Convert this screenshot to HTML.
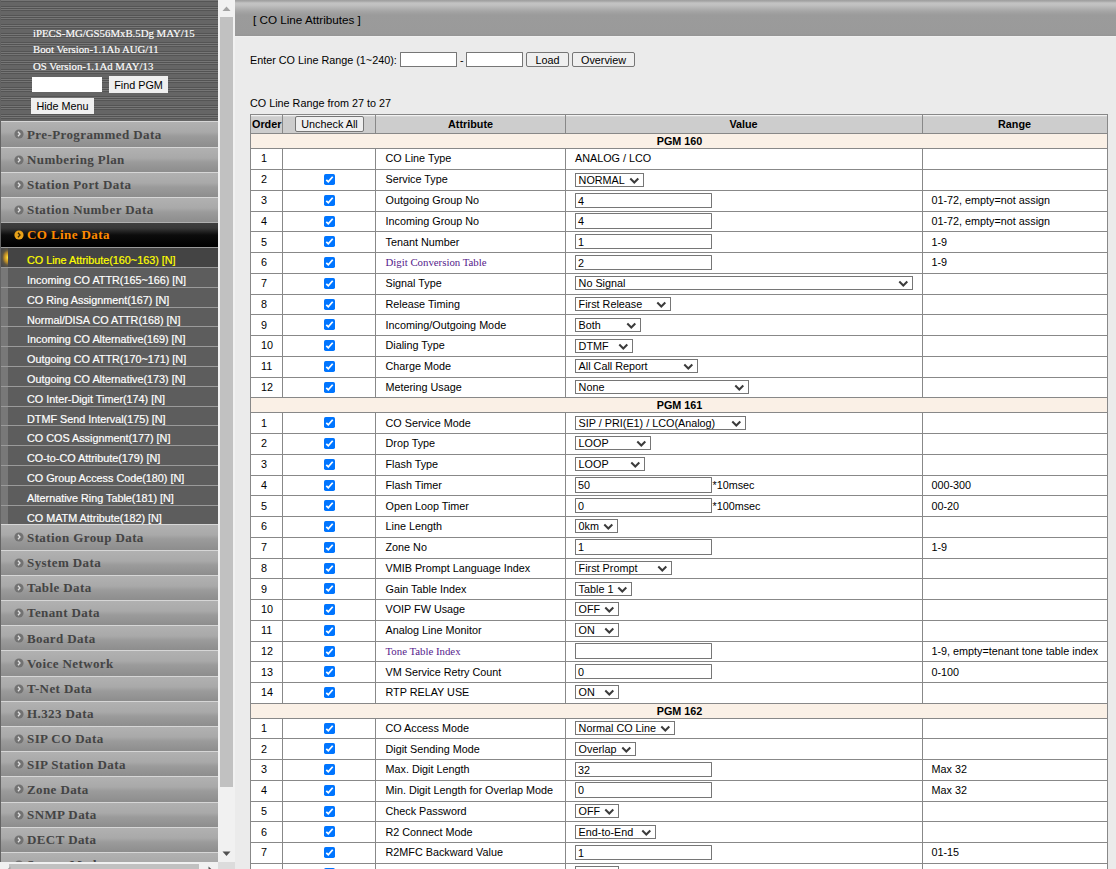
<!DOCTYPE html><html><head><meta charset="utf-8"><style>
html,body{margin:0;padding:0;width:1116px;height:869px;overflow:hidden;background:#ebebeb;font-family:'Liberation Sans',sans-serif;}
svg{display:block;}
.t{position:absolute;white-space:nowrap;line-height:12px;}
.r{position:absolute;}
.sel{position:absolute;box-sizing:border-box;border:1px solid #767676;background:#fff;}
.inp{position:absolute;box-sizing:border-box;border:1px solid #767676;border-radius:0.5px;background:#fff;}
.btn{position:absolute;box-sizing:border-box;background:#efefef;}
</style></head><body>
<div class="r" style="left:235px;top:0px;width:881px;height:36px;background:linear-gradient(#9f9f9f 0px,#a4a4a4 1px,#c3c3c3 3px,#c1c1c1 5px,#a6a6a6 11px,#9b9b9b 15px,#9a9a9a 34px,#959595 36px)"></div>
<div class="r" style="left:235px;top:36px;width:881px;height:1px;background:#f0f0f0"></div>
<div class="t" style="left:253px;top:14px;font-size:11.7px;color:#000;font-family:'Liberation Sans', sans-serif;font-weight:normal;">[ CO Line Attributes ]</div>
<div class="t" style="left:250px;top:54px;font-size:10.8px;color:#000;font-family:'Liberation Sans', sans-serif;font-weight:normal;">Enter CO Line Range (1~240):</div>
<div class="inp" style="left:400px;top:52px;width:57px;height:15px;"><div class="t" style="left:2px;top:1px;font-size:10.8px;"></div></div>
<div class="t" style="left:460px;top:54px;font-size:10.8px;color:#000;font-family:'Liberation Sans', sans-serif;font-weight:normal;">-</div>
<div class="inp" style="left:466px;top:52px;width:57px;height:15px;"><div class="t" style="left:2px;top:1px;font-size:10.8px;"></div></div>
<div class="btn" style="left:526px;top:52px;width:43px;height:15px;border:1px solid #767676;border-radius:2px;"></div>
<div class="t" style="left:247.5px;width:600px;text-align:center;top:54px;font-size:10.8px;color:#000;font-family:'Liberation Sans', sans-serif;font-weight:normal;">Load</div>
<div class="btn" style="left:572px;top:52px;width:63px;height:15px;border:1px solid #767676;border-radius:2px;"></div>
<div class="t" style="left:303.5px;width:600px;text-align:center;top:54px;font-size:10.8px;color:#000;font-family:'Liberation Sans', sans-serif;font-weight:normal;">Overview</div>
<div class="t" style="left:250px;top:97px;font-size:10.8px;color:#000;font-family:'Liberation Sans', sans-serif;font-weight:normal;">CO Line Range from 27 to 27</div>
<div class="r" style="left:250px;top:114px;width:858px;height:20px;background:linear-gradient(#888 0px,#888 1px,#f2f2f2 1px,#f2f2f2 2px,#dadada 2px,#d0d0d0 3px,#cdcdcd 3px,#cdcdcd 100%)"></div>
<div class="t" style="left:252px;top:118px;font-size:10.8px;color:#000;font-family:'Liberation Sans', sans-serif;font-weight:bold;">Order</div>
<div class="btn" style="left:295px;top:116px;width:69px;height:16px;border:1px solid #767676;border-radius:2px;"></div>
<div class="t" style="left:29.5px;width:600px;text-align:center;top:118px;font-size:10.8px;color:#000;font-family:'Liberation Sans', sans-serif;font-weight:normal;">Uncheck All</div>
<div class="t" style="left:170.5px;width:600px;text-align:center;top:118px;font-size:10.8px;color:#000;font-family:'Liberation Sans', sans-serif;font-weight:bold;">Attribute</div>
<div class="t" style="left:443.5px;width:600px;text-align:center;top:118px;font-size:10.8px;color:#000;font-family:'Liberation Sans', sans-serif;font-weight:bold;">Value</div>
<div class="t" style="left:714.5px;width:600px;text-align:center;top:118px;font-size:10.8px;color:#000;font-family:'Liberation Sans', sans-serif;font-weight:bold;">Range</div>
<div class="r" style="left:250px;top:133px;width:858px;height:16px;background:#faf0e6"></div>
<div class="t" style="left:379.5px;width:600px;text-align:center;top:135px;font-size:10.8px;color:#000;font-family:'Liberation Sans', sans-serif;font-weight:bold;">PGM 160</div>
<div class="r" style="left:250px;top:148px;width:858px;height:22px;background:#fff"></div>
<div class="t" style="left:261px;top:152px;font-size:10.8px;color:#000;font-family:'Liberation Sans', sans-serif;font-weight:normal;">1</div>
<div class="t" style="left:385.5px;top:152px;font-size:10.8px;color:#000;font-family:'Liberation Sans', sans-serif;font-weight:normal;">CO Line Type</div>
<div class="t" style="left:575px;top:152px;font-size:10.8px;color:#000;font-family:'Liberation Sans', sans-serif;font-weight:normal;">ANALOG / LCO</div>
<div class="r" style="left:250px;top:169px;width:858px;height:22px;background:#fff"></div>
<div class="t" style="left:261px;top:173px;font-size:10.8px;color:#000;font-family:'Liberation Sans', sans-serif;font-weight:normal;">2</div>
<div class="r" style="left:324px;top:174px;width:11px;height:11px"><svg width="11" height="11" viewBox="0 0 11 11"><rect x="0" y="0" width="11" height="11" rx="1.7" fill="#0075ff"/><path d="M2.3 5.8 L4.3 7.8 L8.7 2.7" fill="none" stroke="#fff" stroke-width="1.75"/></svg></div>
<div class="t" style="left:385.5px;top:173px;font-size:10.8px;color:#000;font-family:'Liberation Sans', sans-serif;font-weight:normal;">Service Type</div>
<div class="sel" style="left:575px;top:173px;width:69px;height:14px;"><div class="t" style="left:2.6px;top:0px;font-size:10.8px;">NORMAL</div><svg width="11" height="8" viewBox="0 0 11 8" style="position:absolute;right:3px;top:2.5px"><path d="M1.3 1.5 L5.3 5.5 L9.3 1.5" fill="none" stroke="#3b3b3b" stroke-width="2"/></svg></div>
<div class="r" style="left:250px;top:190px;width:858px;height:22px;background:#fff"></div>
<div class="t" style="left:261px;top:194px;font-size:10.8px;color:#000;font-family:'Liberation Sans', sans-serif;font-weight:normal;">3</div>
<div class="r" style="left:324px;top:195px;width:11px;height:11px"><svg width="11" height="11" viewBox="0 0 11 11"><rect x="0" y="0" width="11" height="11" rx="1.7" fill="#0075ff"/><path d="M2.3 5.8 L4.3 7.8 L8.7 2.7" fill="none" stroke="#fff" stroke-width="1.75"/></svg></div>
<div class="t" style="left:385.5px;top:194px;font-size:10.8px;color:#000;font-family:'Liberation Sans', sans-serif;font-weight:normal;">Outgoing Group No</div>
<div class="inp" style="left:575px;top:193px;width:137px;height:15px;"><div class="t" style="left:2px;top:1px;font-size:10.8px;">4</div></div>
<div class="t" style="left:931.5px;top:194px;font-size:10.8px;color:#000;font-family:'Liberation Sans', sans-serif;font-weight:normal;">01-72, empty=not assign</div>
<div class="r" style="left:250px;top:211px;width:858px;height:21px;background:#fff"></div>
<div class="t" style="left:261px;top:215px;font-size:10.8px;color:#000;font-family:'Liberation Sans', sans-serif;font-weight:normal;">4</div>
<div class="r" style="left:324px;top:216px;width:11px;height:11px"><svg width="11" height="11" viewBox="0 0 11 11"><rect x="0" y="0" width="11" height="11" rx="1.7" fill="#0075ff"/><path d="M2.3 5.8 L4.3 7.8 L8.7 2.7" fill="none" stroke="#fff" stroke-width="1.75"/></svg></div>
<div class="t" style="left:385.5px;top:215px;font-size:10.8px;color:#000;font-family:'Liberation Sans', sans-serif;font-weight:normal;">Incoming Group No</div>
<div class="inp" style="left:575px;top:213px;width:137px;height:16px;"><div class="t" style="left:2px;top:1px;font-size:10.8px;">4</div></div>
<div class="t" style="left:931.5px;top:215px;font-size:10.8px;color:#000;font-family:'Liberation Sans', sans-serif;font-weight:normal;">01-72, empty=not assign</div>
<div class="r" style="left:250px;top:231px;width:858px;height:22px;background:#fff"></div>
<div class="t" style="left:261px;top:236px;font-size:10.8px;color:#000;font-family:'Liberation Sans', sans-serif;font-weight:normal;">5</div>
<div class="r" style="left:324px;top:236px;width:11px;height:11px"><svg width="11" height="11" viewBox="0 0 11 11"><rect x="0" y="0" width="11" height="11" rx="1.7" fill="#0075ff"/><path d="M2.3 5.8 L4.3 7.8 L8.7 2.7" fill="none" stroke="#fff" stroke-width="1.75"/></svg></div>
<div class="t" style="left:385.5px;top:236px;font-size:10.8px;color:#000;font-family:'Liberation Sans', sans-serif;font-weight:normal;">Tenant Number</div>
<div class="inp" style="left:575px;top:234px;width:137px;height:15px;"><div class="t" style="left:2px;top:1px;font-size:10.8px;">1</div></div>
<div class="t" style="left:931.5px;top:236px;font-size:10.8px;color:#000;font-family:'Liberation Sans', sans-serif;font-weight:normal;">1-9</div>
<div class="r" style="left:250px;top:252px;width:858px;height:22px;background:#fff"></div>
<div class="t" style="left:261px;top:256px;font-size:10.8px;color:#000;font-family:'Liberation Sans', sans-serif;font-weight:normal;">6</div>
<div class="r" style="left:324px;top:257px;width:11px;height:11px"><svg width="11" height="11" viewBox="0 0 11 11"><rect x="0" y="0" width="11" height="11" rx="1.7" fill="#0075ff"/><path d="M2.3 5.8 L4.3 7.8 L8.7 2.7" fill="none" stroke="#fff" stroke-width="1.75"/></svg></div>
<div class="t" style="left:385.5px;top:256px;font-size:10.8px;color:#551a8b;font-family:'Liberation Serif', serif;font-weight:normal;">Digit Conversion Table</div>
<div class="inp" style="left:575px;top:255px;width:137px;height:15px;"><div class="t" style="left:2px;top:1px;font-size:10.8px;">2</div></div>
<div class="t" style="left:931.5px;top:256px;font-size:10.8px;color:#000;font-family:'Liberation Sans', sans-serif;font-weight:normal;">1-9</div>
<div class="r" style="left:250px;top:273px;width:858px;height:22px;background:#fff"></div>
<div class="t" style="left:261px;top:277px;font-size:10.8px;color:#000;font-family:'Liberation Sans', sans-serif;font-weight:normal;">7</div>
<div class="r" style="left:324px;top:278px;width:11px;height:11px"><svg width="11" height="11" viewBox="0 0 11 11"><rect x="0" y="0" width="11" height="11" rx="1.7" fill="#0075ff"/><path d="M2.3 5.8 L4.3 7.8 L8.7 2.7" fill="none" stroke="#fff" stroke-width="1.75"/></svg></div>
<div class="t" style="left:385.5px;top:277px;font-size:10.8px;color:#000;font-family:'Liberation Sans', sans-serif;font-weight:normal;">Signal Type</div>
<div class="sel" style="left:575px;top:276px;width:338px;height:14px;"><div class="t" style="left:2.6px;top:0px;font-size:10.8px;">No Signal</div><svg width="11" height="8" viewBox="0 0 11 8" style="position:absolute;right:3px;top:2.5px"><path d="M1.3 1.5 L5.3 5.5 L9.3 1.5" fill="none" stroke="#3b3b3b" stroke-width="2"/></svg></div>
<div class="r" style="left:250px;top:294px;width:858px;height:21px;background:#fff"></div>
<div class="t" style="left:261px;top:298px;font-size:10.8px;color:#000;font-family:'Liberation Sans', sans-serif;font-weight:normal;">8</div>
<div class="r" style="left:324px;top:299px;width:11px;height:11px"><svg width="11" height="11" viewBox="0 0 11 11"><rect x="0" y="0" width="11" height="11" rx="1.7" fill="#0075ff"/><path d="M2.3 5.8 L4.3 7.8 L8.7 2.7" fill="none" stroke="#fff" stroke-width="1.75"/></svg></div>
<div class="t" style="left:385.5px;top:298px;font-size:10.8px;color:#000;font-family:'Liberation Sans', sans-serif;font-weight:normal;">Release Timing</div>
<div class="sel" style="left:575px;top:297px;width:96px;height:14px;"><div class="t" style="left:2.6px;top:0px;font-size:10.8px;">First Release</div><svg width="11" height="8" viewBox="0 0 11 8" style="position:absolute;right:3px;top:2.5px"><path d="M1.3 1.5 L5.3 5.5 L9.3 1.5" fill="none" stroke="#3b3b3b" stroke-width="2"/></svg></div>
<div class="r" style="left:250px;top:314px;width:858px;height:22px;background:#fff"></div>
<div class="t" style="left:261px;top:319px;font-size:10.8px;color:#000;font-family:'Liberation Sans', sans-serif;font-weight:normal;">9</div>
<div class="r" style="left:324px;top:319px;width:11px;height:11px"><svg width="11" height="11" viewBox="0 0 11 11"><rect x="0" y="0" width="11" height="11" rx="1.7" fill="#0075ff"/><path d="M2.3 5.8 L4.3 7.8 L8.7 2.7" fill="none" stroke="#fff" stroke-width="1.75"/></svg></div>
<div class="t" style="left:385.5px;top:319px;font-size:10.8px;color:#000;font-family:'Liberation Sans', sans-serif;font-weight:normal;">Incoming/Outgoing Mode</div>
<div class="sel" style="left:575px;top:318px;width:66px;height:14px;"><div class="t" style="left:2.6px;top:0px;font-size:10.8px;">Both</div><svg width="11" height="8" viewBox="0 0 11 8" style="position:absolute;right:3px;top:2.5px"><path d="M1.3 1.5 L5.3 5.5 L9.3 1.5" fill="none" stroke="#3b3b3b" stroke-width="2"/></svg></div>
<div class="r" style="left:250px;top:335px;width:858px;height:22px;background:#fff"></div>
<div class="t" style="left:261px;top:339px;font-size:10.8px;color:#000;font-family:'Liberation Sans', sans-serif;font-weight:normal;">10</div>
<div class="r" style="left:324px;top:340px;width:11px;height:11px"><svg width="11" height="11" viewBox="0 0 11 11"><rect x="0" y="0" width="11" height="11" rx="1.7" fill="#0075ff"/><path d="M2.3 5.8 L4.3 7.8 L8.7 2.7" fill="none" stroke="#fff" stroke-width="1.75"/></svg></div>
<div class="t" style="left:385.5px;top:339px;font-size:10.8px;color:#000;font-family:'Liberation Sans', sans-serif;font-weight:normal;">Dialing Type</div>
<div class="sel" style="left:575px;top:339px;width:58px;height:14px;"><div class="t" style="left:2.6px;top:0px;font-size:10.8px;">DTMF</div><svg width="11" height="8" viewBox="0 0 11 8" style="position:absolute;right:3px;top:2.5px"><path d="M1.3 1.5 L5.3 5.5 L9.3 1.5" fill="none" stroke="#3b3b3b" stroke-width="2"/></svg></div>
<div class="r" style="left:250px;top:356px;width:858px;height:22px;background:#fff"></div>
<div class="t" style="left:261px;top:360px;font-size:10.8px;color:#000;font-family:'Liberation Sans', sans-serif;font-weight:normal;">11</div>
<div class="r" style="left:324px;top:361px;width:11px;height:11px"><svg width="11" height="11" viewBox="0 0 11 11"><rect x="0" y="0" width="11" height="11" rx="1.7" fill="#0075ff"/><path d="M2.3 5.8 L4.3 7.8 L8.7 2.7" fill="none" stroke="#fff" stroke-width="1.75"/></svg></div>
<div class="t" style="left:385.5px;top:360px;font-size:10.8px;color:#000;font-family:'Liberation Sans', sans-serif;font-weight:normal;">Charge Mode</div>
<div class="sel" style="left:575px;top:359px;width:123px;height:14px;"><div class="t" style="left:2.6px;top:0px;font-size:10.8px;">All Call Report</div><svg width="11" height="8" viewBox="0 0 11 8" style="position:absolute;right:3px;top:2.5px"><path d="M1.3 1.5 L5.3 5.5 L9.3 1.5" fill="none" stroke="#3b3b3b" stroke-width="2"/></svg></div>
<div class="r" style="left:250px;top:377px;width:858px;height:21px;background:#fff"></div>
<div class="t" style="left:261px;top:381px;font-size:10.8px;color:#000;font-family:'Liberation Sans', sans-serif;font-weight:normal;">12</div>
<div class="r" style="left:324px;top:382px;width:11px;height:11px"><svg width="11" height="11" viewBox="0 0 11 11"><rect x="0" y="0" width="11" height="11" rx="1.7" fill="#0075ff"/><path d="M2.3 5.8 L4.3 7.8 L8.7 2.7" fill="none" stroke="#fff" stroke-width="1.75"/></svg></div>
<div class="t" style="left:385.5px;top:381px;font-size:10.8px;color:#000;font-family:'Liberation Sans', sans-serif;font-weight:normal;">Metering Usage</div>
<div class="sel" style="left:575px;top:380px;width:174px;height:14px;"><div class="t" style="left:2.6px;top:0px;font-size:10.8px;">None</div><svg width="11" height="8" viewBox="0 0 11 8" style="position:absolute;right:3px;top:2.5px"><path d="M1.3 1.5 L5.3 5.5 L9.3 1.5" fill="none" stroke="#3b3b3b" stroke-width="2"/></svg></div>
<div class="r" style="left:250px;top:397px;width:858px;height:16px;background:#faf0e6"></div>
<div class="t" style="left:379.5px;width:600px;text-align:center;top:399px;font-size:10.8px;color:#000;font-family:'Liberation Sans', sans-serif;font-weight:bold;">PGM 161</div>
<div class="r" style="left:250px;top:412px;width:858px;height:22px;background:#fff"></div>
<div class="t" style="left:261px;top:417px;font-size:10.8px;color:#000;font-family:'Liberation Sans', sans-serif;font-weight:normal;">1</div>
<div class="r" style="left:324px;top:417px;width:11px;height:11px"><svg width="11" height="11" viewBox="0 0 11 11"><rect x="0" y="0" width="11" height="11" rx="1.7" fill="#0075ff"/><path d="M2.3 5.8 L4.3 7.8 L8.7 2.7" fill="none" stroke="#fff" stroke-width="1.75"/></svg></div>
<div class="t" style="left:385.5px;top:417px;font-size:10.8px;color:#000;font-family:'Liberation Sans', sans-serif;font-weight:normal;">CO Service Mode</div>
<div class="sel" style="left:575px;top:416px;width:171px;height:14px;"><div class="t" style="left:2.6px;top:0px;font-size:10.8px;">SIP / PRI(E1) / LCO(Analog)</div><svg width="11" height="8" viewBox="0 0 11 8" style="position:absolute;right:3px;top:2.5px"><path d="M1.3 1.5 L5.3 5.5 L9.3 1.5" fill="none" stroke="#3b3b3b" stroke-width="2"/></svg></div>
<div class="r" style="left:250px;top:433px;width:858px;height:22px;background:#fff"></div>
<div class="t" style="left:261px;top:437px;font-size:10.8px;color:#000;font-family:'Liberation Sans', sans-serif;font-weight:normal;">2</div>
<div class="r" style="left:324px;top:438px;width:11px;height:11px"><svg width="11" height="11" viewBox="0 0 11 11"><rect x="0" y="0" width="11" height="11" rx="1.7" fill="#0075ff"/><path d="M2.3 5.8 L4.3 7.8 L8.7 2.7" fill="none" stroke="#fff" stroke-width="1.75"/></svg></div>
<div class="t" style="left:385.5px;top:437px;font-size:10.8px;color:#000;font-family:'Liberation Sans', sans-serif;font-weight:normal;">Drop Type</div>
<div class="sel" style="left:575px;top:436px;width:76px;height:14px;"><div class="t" style="left:2.6px;top:0px;font-size:10.8px;">LOOP</div><svg width="11" height="8" viewBox="0 0 11 8" style="position:absolute;right:3px;top:2.5px"><path d="M1.3 1.5 L5.3 5.5 L9.3 1.5" fill="none" stroke="#3b3b3b" stroke-width="2"/></svg></div>
<div class="r" style="left:250px;top:454px;width:858px;height:22px;background:#fff"></div>
<div class="t" style="left:261px;top:458px;font-size:10.8px;color:#000;font-family:'Liberation Sans', sans-serif;font-weight:normal;">3</div>
<div class="r" style="left:324px;top:459px;width:11px;height:11px"><svg width="11" height="11" viewBox="0 0 11 11"><rect x="0" y="0" width="11" height="11" rx="1.7" fill="#0075ff"/><path d="M2.3 5.8 L4.3 7.8 L8.7 2.7" fill="none" stroke="#fff" stroke-width="1.75"/></svg></div>
<div class="t" style="left:385.5px;top:458px;font-size:10.8px;color:#000;font-family:'Liberation Sans', sans-serif;font-weight:normal;">Flash Type</div>
<div class="sel" style="left:575px;top:457px;width:70px;height:14px;"><div class="t" style="left:2.6px;top:0px;font-size:10.8px;">LOOP</div><svg width="11" height="8" viewBox="0 0 11 8" style="position:absolute;right:3px;top:2.5px"><path d="M1.3 1.5 L5.3 5.5 L9.3 1.5" fill="none" stroke="#3b3b3b" stroke-width="2"/></svg></div>
<div class="r" style="left:250px;top:475px;width:858px;height:21px;background:#fff"></div>
<div class="t" style="left:261px;top:479px;font-size:10.8px;color:#000;font-family:'Liberation Sans', sans-serif;font-weight:normal;">4</div>
<div class="r" style="left:324px;top:480px;width:11px;height:11px"><svg width="11" height="11" viewBox="0 0 11 11"><rect x="0" y="0" width="11" height="11" rx="1.7" fill="#0075ff"/><path d="M2.3 5.8 L4.3 7.8 L8.7 2.7" fill="none" stroke="#fff" stroke-width="1.75"/></svg></div>
<div class="t" style="left:385.5px;top:479px;font-size:10.8px;color:#000;font-family:'Liberation Sans', sans-serif;font-weight:normal;">Flash Timer</div>
<div class="inp" style="left:575px;top:477px;width:137px;height:16px;"><div class="t" style="left:2px;top:1px;font-size:10.8px;">50</div></div>
<div class="t" style="left:712.5px;top:479px;font-size:10.8px;color:#000;font-family:'Liberation Sans', sans-serif;font-weight:normal;">*10msec</div>
<div class="t" style="left:931.5px;top:479px;font-size:10.8px;color:#000;font-family:'Liberation Sans', sans-serif;font-weight:normal;">000-300</div>
<div class="r" style="left:250px;top:495px;width:858px;height:22px;background:#fff"></div>
<div class="t" style="left:261px;top:500px;font-size:10.8px;color:#000;font-family:'Liberation Sans', sans-serif;font-weight:normal;">5</div>
<div class="r" style="left:324px;top:500px;width:11px;height:11px"><svg width="11" height="11" viewBox="0 0 11 11"><rect x="0" y="0" width="11" height="11" rx="1.7" fill="#0075ff"/><path d="M2.3 5.8 L4.3 7.8 L8.7 2.7" fill="none" stroke="#fff" stroke-width="1.75"/></svg></div>
<div class="t" style="left:385.5px;top:500px;font-size:10.8px;color:#000;font-family:'Liberation Sans', sans-serif;font-weight:normal;">Open Loop Timer</div>
<div class="inp" style="left:575px;top:498px;width:137px;height:15px;"><div class="t" style="left:2px;top:1px;font-size:10.8px;">0</div></div>
<div class="t" style="left:712.5px;top:500px;font-size:10.8px;color:#000;font-family:'Liberation Sans', sans-serif;font-weight:normal;">*100msec</div>
<div class="t" style="left:931.5px;top:500px;font-size:10.8px;color:#000;font-family:'Liberation Sans', sans-serif;font-weight:normal;">00-20</div>
<div class="r" style="left:250px;top:516px;width:858px;height:22px;background:#fff"></div>
<div class="t" style="left:261px;top:520px;font-size:10.8px;color:#000;font-family:'Liberation Sans', sans-serif;font-weight:normal;">6</div>
<div class="r" style="left:324px;top:521px;width:11px;height:11px"><svg width="11" height="11" viewBox="0 0 11 11"><rect x="0" y="0" width="11" height="11" rx="1.7" fill="#0075ff"/><path d="M2.3 5.8 L4.3 7.8 L8.7 2.7" fill="none" stroke="#fff" stroke-width="1.75"/></svg></div>
<div class="t" style="left:385.5px;top:520px;font-size:10.8px;color:#000;font-family:'Liberation Sans', sans-serif;font-weight:normal;">Line Length</div>
<div class="sel" style="left:575px;top:519px;width:43px;height:14px;"><div class="t" style="left:2.6px;top:0px;font-size:10.8px;">0km</div><svg width="11" height="8" viewBox="0 0 11 8" style="position:absolute;right:3px;top:2.5px"><path d="M1.3 1.5 L5.3 5.5 L9.3 1.5" fill="none" stroke="#3b3b3b" stroke-width="2"/></svg></div>
<div class="r" style="left:250px;top:537px;width:858px;height:22px;background:#fff"></div>
<div class="t" style="left:261px;top:541px;font-size:10.8px;color:#000;font-family:'Liberation Sans', sans-serif;font-weight:normal;">7</div>
<div class="r" style="left:324px;top:542px;width:11px;height:11px"><svg width="11" height="11" viewBox="0 0 11 11"><rect x="0" y="0" width="11" height="11" rx="1.7" fill="#0075ff"/><path d="M2.3 5.8 L4.3 7.8 L8.7 2.7" fill="none" stroke="#fff" stroke-width="1.75"/></svg></div>
<div class="t" style="left:385.5px;top:541px;font-size:10.8px;color:#000;font-family:'Liberation Sans', sans-serif;font-weight:normal;">Zone No</div>
<div class="inp" style="left:575px;top:539px;width:137px;height:16px;"><div class="t" style="left:2px;top:1px;font-size:10.8px;">1</div></div>
<div class="t" style="left:931.5px;top:541px;font-size:10.8px;color:#000;font-family:'Liberation Sans', sans-serif;font-weight:normal;">1-9</div>
<div class="r" style="left:250px;top:558px;width:858px;height:21px;background:#fff"></div>
<div class="t" style="left:261px;top:562px;font-size:10.8px;color:#000;font-family:'Liberation Sans', sans-serif;font-weight:normal;">8</div>
<div class="r" style="left:324px;top:563px;width:11px;height:11px"><svg width="11" height="11" viewBox="0 0 11 11"><rect x="0" y="0" width="11" height="11" rx="1.7" fill="#0075ff"/><path d="M2.3 5.8 L4.3 7.8 L8.7 2.7" fill="none" stroke="#fff" stroke-width="1.75"/></svg></div>
<div class="t" style="left:385.5px;top:562px;font-size:10.8px;color:#000;font-family:'Liberation Sans', sans-serif;font-weight:normal;">VMIB Prompt Language Index</div>
<div class="sel" style="left:575px;top:561px;width:97px;height:14px;"><div class="t" style="left:2.6px;top:0px;font-size:10.8px;">First Prompt</div><svg width="11" height="8" viewBox="0 0 11 8" style="position:absolute;right:3px;top:2.5px"><path d="M1.3 1.5 L5.3 5.5 L9.3 1.5" fill="none" stroke="#3b3b3b" stroke-width="2"/></svg></div>
<div class="r" style="left:250px;top:578px;width:858px;height:22px;background:#fff"></div>
<div class="t" style="left:261px;top:583px;font-size:10.8px;color:#000;font-family:'Liberation Sans', sans-serif;font-weight:normal;">9</div>
<div class="r" style="left:324px;top:583px;width:11px;height:11px"><svg width="11" height="11" viewBox="0 0 11 11"><rect x="0" y="0" width="11" height="11" rx="1.7" fill="#0075ff"/><path d="M2.3 5.8 L4.3 7.8 L8.7 2.7" fill="none" stroke="#fff" stroke-width="1.75"/></svg></div>
<div class="t" style="left:385.5px;top:583px;font-size:10.8px;color:#000;font-family:'Liberation Sans', sans-serif;font-weight:normal;">Gain Table Index</div>
<div class="sel" style="left:575px;top:582px;width:57px;height:14px;"><div class="t" style="left:2.6px;top:0px;font-size:10.8px;">Table 1</div><svg width="11" height="8" viewBox="0 0 11 8" style="position:absolute;right:3px;top:2.5px"><path d="M1.3 1.5 L5.3 5.5 L9.3 1.5" fill="none" stroke="#3b3b3b" stroke-width="2"/></svg></div>
<div class="r" style="left:250px;top:599px;width:858px;height:22px;background:#fff"></div>
<div class="t" style="left:261px;top:603px;font-size:10.8px;color:#000;font-family:'Liberation Sans', sans-serif;font-weight:normal;">10</div>
<div class="r" style="left:324px;top:604px;width:11px;height:11px"><svg width="11" height="11" viewBox="0 0 11 11"><rect x="0" y="0" width="11" height="11" rx="1.7" fill="#0075ff"/><path d="M2.3 5.8 L4.3 7.8 L8.7 2.7" fill="none" stroke="#fff" stroke-width="1.75"/></svg></div>
<div class="t" style="left:385.5px;top:603px;font-size:10.8px;color:#000;font-family:'Liberation Sans', sans-serif;font-weight:normal;">VOIP FW Usage</div>
<div class="sel" style="left:575px;top:602px;width:44px;height:14px;"><div class="t" style="left:2.6px;top:0px;font-size:10.8px;">OFF</div><svg width="11" height="8" viewBox="0 0 11 8" style="position:absolute;right:3px;top:2.5px"><path d="M1.3 1.5 L5.3 5.5 L9.3 1.5" fill="none" stroke="#3b3b3b" stroke-width="2"/></svg></div>
<div class="r" style="left:250px;top:620px;width:858px;height:22px;background:#fff"></div>
<div class="t" style="left:261px;top:624px;font-size:10.8px;color:#000;font-family:'Liberation Sans', sans-serif;font-weight:normal;">11</div>
<div class="r" style="left:324px;top:625px;width:11px;height:11px"><svg width="11" height="11" viewBox="0 0 11 11"><rect x="0" y="0" width="11" height="11" rx="1.7" fill="#0075ff"/><path d="M2.3 5.8 L4.3 7.8 L8.7 2.7" fill="none" stroke="#fff" stroke-width="1.75"/></svg></div>
<div class="t" style="left:385.5px;top:624px;font-size:10.8px;color:#000;font-family:'Liberation Sans', sans-serif;font-weight:normal;">Analog Line Monitor</div>
<div class="sel" style="left:575px;top:623px;width:44px;height:14px;"><div class="t" style="left:2.6px;top:0px;font-size:10.8px;">ON</div><svg width="11" height="8" viewBox="0 0 11 8" style="position:absolute;right:3px;top:2.5px"><path d="M1.3 1.5 L5.3 5.5 L9.3 1.5" fill="none" stroke="#3b3b3b" stroke-width="2"/></svg></div>
<div class="r" style="left:250px;top:641px;width:858px;height:21px;background:#fff"></div>
<div class="t" style="left:261px;top:645px;font-size:10.8px;color:#000;font-family:'Liberation Sans', sans-serif;font-weight:normal;">12</div>
<div class="r" style="left:324px;top:646px;width:11px;height:11px"><svg width="11" height="11" viewBox="0 0 11 11"><rect x="0" y="0" width="11" height="11" rx="1.7" fill="#0075ff"/><path d="M2.3 5.8 L4.3 7.8 L8.7 2.7" fill="none" stroke="#fff" stroke-width="1.75"/></svg></div>
<div class="t" style="left:385.5px;top:645px;font-size:10.8px;color:#551a8b;font-family:'Liberation Serif', serif;font-weight:normal;">Tone Table Index</div>
<div class="inp" style="left:575px;top:643px;width:137px;height:16px;"><div class="t" style="left:2px;top:1px;font-size:10.8px;"></div></div>
<div class="t" style="left:931.5px;top:645px;font-size:10.8px;color:#000;font-family:'Liberation Sans', sans-serif;font-weight:normal;">1-9, empty=tenant tone table index</div>
<div class="r" style="left:250px;top:661px;width:858px;height:22px;background:#fff"></div>
<div class="t" style="left:261px;top:666px;font-size:10.8px;color:#000;font-family:'Liberation Sans', sans-serif;font-weight:normal;">13</div>
<div class="r" style="left:324px;top:666px;width:11px;height:11px"><svg width="11" height="11" viewBox="0 0 11 11"><rect x="0" y="0" width="11" height="11" rx="1.7" fill="#0075ff"/><path d="M2.3 5.8 L4.3 7.8 L8.7 2.7" fill="none" stroke="#fff" stroke-width="1.75"/></svg></div>
<div class="t" style="left:385.5px;top:666px;font-size:10.8px;color:#000;font-family:'Liberation Sans', sans-serif;font-weight:normal;">VM Service Retry Count</div>
<div class="inp" style="left:575px;top:664px;width:137px;height:15px;"><div class="t" style="left:2px;top:1px;font-size:10.8px;">0</div></div>
<div class="t" style="left:931.5px;top:666px;font-size:10.8px;color:#000;font-family:'Liberation Sans', sans-serif;font-weight:normal;">0-100</div>
<div class="r" style="left:250px;top:682px;width:858px;height:22px;background:#fff"></div>
<div class="t" style="left:261px;top:686px;font-size:10.8px;color:#000;font-family:'Liberation Sans', sans-serif;font-weight:normal;">14</div>
<div class="r" style="left:324px;top:687px;width:11px;height:11px"><svg width="11" height="11" viewBox="0 0 11 11"><rect x="0" y="0" width="11" height="11" rx="1.7" fill="#0075ff"/><path d="M2.3 5.8 L4.3 7.8 L8.7 2.7" fill="none" stroke="#fff" stroke-width="1.75"/></svg></div>
<div class="t" style="left:385.5px;top:686px;font-size:10.8px;color:#000;font-family:'Liberation Sans', sans-serif;font-weight:normal;">RTP RELAY USE</div>
<div class="sel" style="left:575px;top:685px;width:44px;height:14px;"><div class="t" style="left:2.6px;top:0px;font-size:10.8px;">ON</div><svg width="11" height="8" viewBox="0 0 11 8" style="position:absolute;right:3px;top:2.5px"><path d="M1.3 1.5 L5.3 5.5 L9.3 1.5" fill="none" stroke="#3b3b3b" stroke-width="2"/></svg></div>
<div class="r" style="left:250px;top:703px;width:858px;height:16px;background:#faf0e6"></div>
<div class="t" style="left:379.5px;width:600px;text-align:center;top:705px;font-size:10.8px;color:#000;font-family:'Liberation Sans', sans-serif;font-weight:bold;">PGM 162</div>
<div class="r" style="left:250px;top:718px;width:858px;height:21px;background:#fff"></div>
<div class="t" style="left:261px;top:722px;font-size:10.8px;color:#000;font-family:'Liberation Sans', sans-serif;font-weight:normal;">1</div>
<div class="r" style="left:324px;top:723px;width:11px;height:11px"><svg width="11" height="11" viewBox="0 0 11 11"><rect x="0" y="0" width="11" height="11" rx="1.7" fill="#0075ff"/><path d="M2.3 5.8 L4.3 7.8 L8.7 2.7" fill="none" stroke="#fff" stroke-width="1.75"/></svg></div>
<div class="t" style="left:385.5px;top:722px;font-size:10.8px;color:#000;font-family:'Liberation Sans', sans-serif;font-weight:normal;">CO Access Mode</div>
<div class="sel" style="left:575px;top:721px;width:100px;height:14px;"><div class="t" style="left:2.6px;top:0px;font-size:10.8px;">Normal CO Line</div><svg width="11" height="8" viewBox="0 0 11 8" style="position:absolute;right:3px;top:2.5px"><path d="M1.3 1.5 L5.3 5.5 L9.3 1.5" fill="none" stroke="#3b3b3b" stroke-width="2"/></svg></div>
<div class="r" style="left:250px;top:738px;width:858px;height:22px;background:#fff"></div>
<div class="t" style="left:261px;top:743px;font-size:10.8px;color:#000;font-family:'Liberation Sans', sans-serif;font-weight:normal;">2</div>
<div class="r" style="left:324px;top:743px;width:11px;height:11px"><svg width="11" height="11" viewBox="0 0 11 11"><rect x="0" y="0" width="11" height="11" rx="1.7" fill="#0075ff"/><path d="M2.3 5.8 L4.3 7.8 L8.7 2.7" fill="none" stroke="#fff" stroke-width="1.75"/></svg></div>
<div class="t" style="left:385.5px;top:743px;font-size:10.8px;color:#000;font-family:'Liberation Sans', sans-serif;font-weight:normal;">Digit Sending Mode</div>
<div class="sel" style="left:575px;top:742px;width:61px;height:14px;"><div class="t" style="left:2.6px;top:0px;font-size:10.8px;">Overlap</div><svg width="11" height="8" viewBox="0 0 11 8" style="position:absolute;right:3px;top:2.5px"><path d="M1.3 1.5 L5.3 5.5 L9.3 1.5" fill="none" stroke="#3b3b3b" stroke-width="2"/></svg></div>
<div class="r" style="left:250px;top:759px;width:858px;height:22px;background:#fff"></div>
<div class="t" style="left:261px;top:763px;font-size:10.8px;color:#000;font-family:'Liberation Sans', sans-serif;font-weight:normal;">3</div>
<div class="r" style="left:324px;top:764px;width:11px;height:11px"><svg width="11" height="11" viewBox="0 0 11 11"><rect x="0" y="0" width="11" height="11" rx="1.7" fill="#0075ff"/><path d="M2.3 5.8 L4.3 7.8 L8.7 2.7" fill="none" stroke="#fff" stroke-width="1.75"/></svg></div>
<div class="t" style="left:385.5px;top:763px;font-size:10.8px;color:#000;font-family:'Liberation Sans', sans-serif;font-weight:normal;">Max. Digit Length</div>
<div class="inp" style="left:575px;top:762px;width:137px;height:15px;"><div class="t" style="left:2px;top:1px;font-size:10.8px;">32</div></div>
<div class="t" style="left:931.5px;top:763px;font-size:10.8px;color:#000;font-family:'Liberation Sans', sans-serif;font-weight:normal;">Max 32</div>
<div class="r" style="left:250px;top:780px;width:858px;height:22px;background:#fff"></div>
<div class="t" style="left:261px;top:784px;font-size:10.8px;color:#000;font-family:'Liberation Sans', sans-serif;font-weight:normal;">4</div>
<div class="r" style="left:324px;top:785px;width:11px;height:11px"><svg width="11" height="11" viewBox="0 0 11 11"><rect x="0" y="0" width="11" height="11" rx="1.7" fill="#0075ff"/><path d="M2.3 5.8 L4.3 7.8 L8.7 2.7" fill="none" stroke="#fff" stroke-width="1.75"/></svg></div>
<div class="t" style="left:385.5px;top:784px;font-size:10.8px;color:#000;font-family:'Liberation Sans', sans-serif;font-weight:normal;">Min. Digit Length for Overlap Mode</div>
<div class="inp" style="left:575px;top:782px;width:137px;height:16px;"><div class="t" style="left:2px;top:1px;font-size:10.8px;">0</div></div>
<div class="t" style="left:931.5px;top:784px;font-size:10.8px;color:#000;font-family:'Liberation Sans', sans-serif;font-weight:normal;">Max 32</div>
<div class="r" style="left:250px;top:801px;width:858px;height:21px;background:#fff"></div>
<div class="t" style="left:261px;top:805px;font-size:10.8px;color:#000;font-family:'Liberation Sans', sans-serif;font-weight:normal;">5</div>
<div class="r" style="left:324px;top:806px;width:11px;height:11px"><svg width="11" height="11" viewBox="0 0 11 11"><rect x="0" y="0" width="11" height="11" rx="1.7" fill="#0075ff"/><path d="M2.3 5.8 L4.3 7.8 L8.7 2.7" fill="none" stroke="#fff" stroke-width="1.75"/></svg></div>
<div class="t" style="left:385.5px;top:805px;font-size:10.8px;color:#000;font-family:'Liberation Sans', sans-serif;font-weight:normal;">Check Password</div>
<div class="sel" style="left:575px;top:804px;width:44px;height:14px;"><div class="t" style="left:2.6px;top:0px;font-size:10.8px;">OFF</div><svg width="11" height="8" viewBox="0 0 11 8" style="position:absolute;right:3px;top:2.5px"><path d="M1.3 1.5 L5.3 5.5 L9.3 1.5" fill="none" stroke="#3b3b3b" stroke-width="2"/></svg></div>
<div class="r" style="left:250px;top:821px;width:858px;height:22px;background:#fff"></div>
<div class="t" style="left:261px;top:826px;font-size:10.8px;color:#000;font-family:'Liberation Sans', sans-serif;font-weight:normal;">6</div>
<div class="r" style="left:324px;top:826px;width:11px;height:11px"><svg width="11" height="11" viewBox="0 0 11 11"><rect x="0" y="0" width="11" height="11" rx="1.7" fill="#0075ff"/><path d="M2.3 5.8 L4.3 7.8 L8.7 2.7" fill="none" stroke="#fff" stroke-width="1.75"/></svg></div>
<div class="t" style="left:385.5px;top:826px;font-size:10.8px;color:#000;font-family:'Liberation Sans', sans-serif;font-weight:normal;">R2 Connect Mode</div>
<div class="sel" style="left:575px;top:825px;width:81px;height:14px;"><div class="t" style="left:2.6px;top:0px;font-size:10.8px;">End-to-End</div><svg width="11" height="8" viewBox="0 0 11 8" style="position:absolute;right:3px;top:2.5px"><path d="M1.3 1.5 L5.3 5.5 L9.3 1.5" fill="none" stroke="#3b3b3b" stroke-width="2"/></svg></div>
<div class="r" style="left:250px;top:842px;width:858px;height:22px;background:#fff"></div>
<div class="t" style="left:261px;top:846px;font-size:10.8px;color:#000;font-family:'Liberation Sans', sans-serif;font-weight:normal;">7</div>
<div class="r" style="left:324px;top:847px;width:11px;height:11px"><svg width="11" height="11" viewBox="0 0 11 11"><rect x="0" y="0" width="11" height="11" rx="1.7" fill="#0075ff"/><path d="M2.3 5.8 L4.3 7.8 L8.7 2.7" fill="none" stroke="#fff" stroke-width="1.75"/></svg></div>
<div class="t" style="left:385.5px;top:846px;font-size:10.8px;color:#000;font-family:'Liberation Sans', sans-serif;font-weight:normal;">R2MFC Backward Value</div>
<div class="inp" style="left:575px;top:845px;width:137px;height:15px;"><div class="t" style="left:2px;top:1px;font-size:10.8px;">1</div></div>
<div class="t" style="left:931.5px;top:846px;font-size:10.8px;color:#000;font-family:'Liberation Sans', sans-serif;font-weight:normal;">01-15</div>
<div class="r" style="left:250px;top:863px;width:858px;height:22px;background:#fff"></div>
<div class="t" style="left:261px;top:867px;font-size:10.8px;color:#000;font-family:'Liberation Sans', sans-serif;font-weight:normal;">8</div>
<div class="r" style="left:324px;top:868px;width:11px;height:11px"><svg width="11" height="11" viewBox="0 0 11 11"><rect x="0" y="0" width="11" height="11" rx="1.7" fill="#0075ff"/><path d="M2.3 5.8 L4.3 7.8 L8.7 2.7" fill="none" stroke="#fff" stroke-width="1.75"/></svg></div>
<div class="t" style="left:385.5px;top:867px;font-size:10.8px;color:#000;font-family:'Liberation Sans', sans-serif;font-weight:normal;">R2MFC Forward Value</div>
<div class="sel" style="left:575px;top:866px;width:44px;height:14px;"><div class="t" style="left:2.6px;top:0px;font-size:10.8px;">ON</div><svg width="11" height="8" viewBox="0 0 11 8" style="position:absolute;right:3px;top:2.5px"><path d="M1.3 1.5 L5.3 5.5 L9.3 1.5" fill="none" stroke="#3b3b3b" stroke-width="2"/></svg></div>
<div class="r" style="left:250px;top:114px;width:858px;height:1px;background:#888"></div>
<div class="r" style="left:250px;top:133px;width:858px;height:1px;background:#888"></div>
<div class="r" style="left:250px;top:148px;width:858px;height:1px;background:#888"></div>
<div class="r" style="left:250px;top:169px;width:858px;height:1px;background:#888"></div>
<div class="r" style="left:250px;top:190px;width:858px;height:1px;background:#888"></div>
<div class="r" style="left:250px;top:211px;width:858px;height:1px;background:#888"></div>
<div class="r" style="left:250px;top:231px;width:858px;height:1px;background:#888"></div>
<div class="r" style="left:250px;top:252px;width:858px;height:1px;background:#888"></div>
<div class="r" style="left:250px;top:273px;width:858px;height:1px;background:#888"></div>
<div class="r" style="left:250px;top:294px;width:858px;height:1px;background:#888"></div>
<div class="r" style="left:250px;top:314px;width:858px;height:1px;background:#888"></div>
<div class="r" style="left:250px;top:335px;width:858px;height:1px;background:#888"></div>
<div class="r" style="left:250px;top:356px;width:858px;height:1px;background:#888"></div>
<div class="r" style="left:250px;top:377px;width:858px;height:1px;background:#888"></div>
<div class="r" style="left:250px;top:397px;width:858px;height:1px;background:#888"></div>
<div class="r" style="left:250px;top:412px;width:858px;height:1px;background:#888"></div>
<div class="r" style="left:250px;top:433px;width:858px;height:1px;background:#888"></div>
<div class="r" style="left:250px;top:454px;width:858px;height:1px;background:#888"></div>
<div class="r" style="left:250px;top:475px;width:858px;height:1px;background:#888"></div>
<div class="r" style="left:250px;top:495px;width:858px;height:1px;background:#888"></div>
<div class="r" style="left:250px;top:516px;width:858px;height:1px;background:#888"></div>
<div class="r" style="left:250px;top:537px;width:858px;height:1px;background:#888"></div>
<div class="r" style="left:250px;top:558px;width:858px;height:1px;background:#888"></div>
<div class="r" style="left:250px;top:578px;width:858px;height:1px;background:#888"></div>
<div class="r" style="left:250px;top:599px;width:858px;height:1px;background:#888"></div>
<div class="r" style="left:250px;top:620px;width:858px;height:1px;background:#888"></div>
<div class="r" style="left:250px;top:641px;width:858px;height:1px;background:#888"></div>
<div class="r" style="left:250px;top:661px;width:858px;height:1px;background:#888"></div>
<div class="r" style="left:250px;top:682px;width:858px;height:1px;background:#888"></div>
<div class="r" style="left:250px;top:703px;width:858px;height:1px;background:#888"></div>
<div class="r" style="left:250px;top:718px;width:858px;height:1px;background:#888"></div>
<div class="r" style="left:250px;top:738px;width:858px;height:1px;background:#888"></div>
<div class="r" style="left:250px;top:759px;width:858px;height:1px;background:#888"></div>
<div class="r" style="left:250px;top:780px;width:858px;height:1px;background:#888"></div>
<div class="r" style="left:250px;top:801px;width:858px;height:1px;background:#888"></div>
<div class="r" style="left:250px;top:821px;width:858px;height:1px;background:#888"></div>
<div class="r" style="left:250px;top:842px;width:858px;height:1px;background:#888"></div>
<div class="r" style="left:250px;top:863px;width:858px;height:1px;background:#888"></div>
<div class="r" style="left:250px;top:884px;width:858px;height:1px;background:#888"></div>
<div class="r" style="left:250px;top:114px;width:1px;height:20px;background:#888"></div>
<div class="r" style="left:282px;top:114px;width:1px;height:20px;background:#888"></div>
<div class="r" style="left:375px;top:114px;width:1px;height:20px;background:#888"></div>
<div class="r" style="left:565px;top:114px;width:1px;height:20px;background:#888"></div>
<div class="r" style="left:922px;top:114px;width:1px;height:20px;background:#888"></div>
<div class="r" style="left:1107px;top:114px;width:1px;height:20px;background:#888"></div>
<div class="r" style="left:250px;top:148px;width:1px;height:22px;background:#888"></div>
<div class="r" style="left:282px;top:148px;width:1px;height:22px;background:#888"></div>
<div class="r" style="left:375px;top:148px;width:1px;height:22px;background:#888"></div>
<div class="r" style="left:565px;top:148px;width:1px;height:22px;background:#888"></div>
<div class="r" style="left:922px;top:148px;width:1px;height:22px;background:#888"></div>
<div class="r" style="left:1107px;top:148px;width:1px;height:22px;background:#888"></div>
<div class="r" style="left:250px;top:169px;width:1px;height:22px;background:#888"></div>
<div class="r" style="left:282px;top:169px;width:1px;height:22px;background:#888"></div>
<div class="r" style="left:375px;top:169px;width:1px;height:22px;background:#888"></div>
<div class="r" style="left:565px;top:169px;width:1px;height:22px;background:#888"></div>
<div class="r" style="left:922px;top:169px;width:1px;height:22px;background:#888"></div>
<div class="r" style="left:1107px;top:169px;width:1px;height:22px;background:#888"></div>
<div class="r" style="left:250px;top:190px;width:1px;height:22px;background:#888"></div>
<div class="r" style="left:282px;top:190px;width:1px;height:22px;background:#888"></div>
<div class="r" style="left:375px;top:190px;width:1px;height:22px;background:#888"></div>
<div class="r" style="left:565px;top:190px;width:1px;height:22px;background:#888"></div>
<div class="r" style="left:922px;top:190px;width:1px;height:22px;background:#888"></div>
<div class="r" style="left:1107px;top:190px;width:1px;height:22px;background:#888"></div>
<div class="r" style="left:250px;top:211px;width:1px;height:21px;background:#888"></div>
<div class="r" style="left:282px;top:211px;width:1px;height:21px;background:#888"></div>
<div class="r" style="left:375px;top:211px;width:1px;height:21px;background:#888"></div>
<div class="r" style="left:565px;top:211px;width:1px;height:21px;background:#888"></div>
<div class="r" style="left:922px;top:211px;width:1px;height:21px;background:#888"></div>
<div class="r" style="left:1107px;top:211px;width:1px;height:21px;background:#888"></div>
<div class="r" style="left:250px;top:231px;width:1px;height:22px;background:#888"></div>
<div class="r" style="left:282px;top:231px;width:1px;height:22px;background:#888"></div>
<div class="r" style="left:375px;top:231px;width:1px;height:22px;background:#888"></div>
<div class="r" style="left:565px;top:231px;width:1px;height:22px;background:#888"></div>
<div class="r" style="left:922px;top:231px;width:1px;height:22px;background:#888"></div>
<div class="r" style="left:1107px;top:231px;width:1px;height:22px;background:#888"></div>
<div class="r" style="left:250px;top:252px;width:1px;height:22px;background:#888"></div>
<div class="r" style="left:282px;top:252px;width:1px;height:22px;background:#888"></div>
<div class="r" style="left:375px;top:252px;width:1px;height:22px;background:#888"></div>
<div class="r" style="left:565px;top:252px;width:1px;height:22px;background:#888"></div>
<div class="r" style="left:922px;top:252px;width:1px;height:22px;background:#888"></div>
<div class="r" style="left:1107px;top:252px;width:1px;height:22px;background:#888"></div>
<div class="r" style="left:250px;top:273px;width:1px;height:22px;background:#888"></div>
<div class="r" style="left:282px;top:273px;width:1px;height:22px;background:#888"></div>
<div class="r" style="left:375px;top:273px;width:1px;height:22px;background:#888"></div>
<div class="r" style="left:565px;top:273px;width:1px;height:22px;background:#888"></div>
<div class="r" style="left:922px;top:273px;width:1px;height:22px;background:#888"></div>
<div class="r" style="left:1107px;top:273px;width:1px;height:22px;background:#888"></div>
<div class="r" style="left:250px;top:294px;width:1px;height:21px;background:#888"></div>
<div class="r" style="left:282px;top:294px;width:1px;height:21px;background:#888"></div>
<div class="r" style="left:375px;top:294px;width:1px;height:21px;background:#888"></div>
<div class="r" style="left:565px;top:294px;width:1px;height:21px;background:#888"></div>
<div class="r" style="left:922px;top:294px;width:1px;height:21px;background:#888"></div>
<div class="r" style="left:1107px;top:294px;width:1px;height:21px;background:#888"></div>
<div class="r" style="left:250px;top:314px;width:1px;height:22px;background:#888"></div>
<div class="r" style="left:282px;top:314px;width:1px;height:22px;background:#888"></div>
<div class="r" style="left:375px;top:314px;width:1px;height:22px;background:#888"></div>
<div class="r" style="left:565px;top:314px;width:1px;height:22px;background:#888"></div>
<div class="r" style="left:922px;top:314px;width:1px;height:22px;background:#888"></div>
<div class="r" style="left:1107px;top:314px;width:1px;height:22px;background:#888"></div>
<div class="r" style="left:250px;top:335px;width:1px;height:22px;background:#888"></div>
<div class="r" style="left:282px;top:335px;width:1px;height:22px;background:#888"></div>
<div class="r" style="left:375px;top:335px;width:1px;height:22px;background:#888"></div>
<div class="r" style="left:565px;top:335px;width:1px;height:22px;background:#888"></div>
<div class="r" style="left:922px;top:335px;width:1px;height:22px;background:#888"></div>
<div class="r" style="left:1107px;top:335px;width:1px;height:22px;background:#888"></div>
<div class="r" style="left:250px;top:356px;width:1px;height:22px;background:#888"></div>
<div class="r" style="left:282px;top:356px;width:1px;height:22px;background:#888"></div>
<div class="r" style="left:375px;top:356px;width:1px;height:22px;background:#888"></div>
<div class="r" style="left:565px;top:356px;width:1px;height:22px;background:#888"></div>
<div class="r" style="left:922px;top:356px;width:1px;height:22px;background:#888"></div>
<div class="r" style="left:1107px;top:356px;width:1px;height:22px;background:#888"></div>
<div class="r" style="left:250px;top:377px;width:1px;height:21px;background:#888"></div>
<div class="r" style="left:282px;top:377px;width:1px;height:21px;background:#888"></div>
<div class="r" style="left:375px;top:377px;width:1px;height:21px;background:#888"></div>
<div class="r" style="left:565px;top:377px;width:1px;height:21px;background:#888"></div>
<div class="r" style="left:922px;top:377px;width:1px;height:21px;background:#888"></div>
<div class="r" style="left:1107px;top:377px;width:1px;height:21px;background:#888"></div>
<div class="r" style="left:250px;top:412px;width:1px;height:22px;background:#888"></div>
<div class="r" style="left:282px;top:412px;width:1px;height:22px;background:#888"></div>
<div class="r" style="left:375px;top:412px;width:1px;height:22px;background:#888"></div>
<div class="r" style="left:565px;top:412px;width:1px;height:22px;background:#888"></div>
<div class="r" style="left:922px;top:412px;width:1px;height:22px;background:#888"></div>
<div class="r" style="left:1107px;top:412px;width:1px;height:22px;background:#888"></div>
<div class="r" style="left:250px;top:433px;width:1px;height:22px;background:#888"></div>
<div class="r" style="left:282px;top:433px;width:1px;height:22px;background:#888"></div>
<div class="r" style="left:375px;top:433px;width:1px;height:22px;background:#888"></div>
<div class="r" style="left:565px;top:433px;width:1px;height:22px;background:#888"></div>
<div class="r" style="left:922px;top:433px;width:1px;height:22px;background:#888"></div>
<div class="r" style="left:1107px;top:433px;width:1px;height:22px;background:#888"></div>
<div class="r" style="left:250px;top:454px;width:1px;height:22px;background:#888"></div>
<div class="r" style="left:282px;top:454px;width:1px;height:22px;background:#888"></div>
<div class="r" style="left:375px;top:454px;width:1px;height:22px;background:#888"></div>
<div class="r" style="left:565px;top:454px;width:1px;height:22px;background:#888"></div>
<div class="r" style="left:922px;top:454px;width:1px;height:22px;background:#888"></div>
<div class="r" style="left:1107px;top:454px;width:1px;height:22px;background:#888"></div>
<div class="r" style="left:250px;top:475px;width:1px;height:21px;background:#888"></div>
<div class="r" style="left:282px;top:475px;width:1px;height:21px;background:#888"></div>
<div class="r" style="left:375px;top:475px;width:1px;height:21px;background:#888"></div>
<div class="r" style="left:565px;top:475px;width:1px;height:21px;background:#888"></div>
<div class="r" style="left:922px;top:475px;width:1px;height:21px;background:#888"></div>
<div class="r" style="left:1107px;top:475px;width:1px;height:21px;background:#888"></div>
<div class="r" style="left:250px;top:495px;width:1px;height:22px;background:#888"></div>
<div class="r" style="left:282px;top:495px;width:1px;height:22px;background:#888"></div>
<div class="r" style="left:375px;top:495px;width:1px;height:22px;background:#888"></div>
<div class="r" style="left:565px;top:495px;width:1px;height:22px;background:#888"></div>
<div class="r" style="left:922px;top:495px;width:1px;height:22px;background:#888"></div>
<div class="r" style="left:1107px;top:495px;width:1px;height:22px;background:#888"></div>
<div class="r" style="left:250px;top:516px;width:1px;height:22px;background:#888"></div>
<div class="r" style="left:282px;top:516px;width:1px;height:22px;background:#888"></div>
<div class="r" style="left:375px;top:516px;width:1px;height:22px;background:#888"></div>
<div class="r" style="left:565px;top:516px;width:1px;height:22px;background:#888"></div>
<div class="r" style="left:922px;top:516px;width:1px;height:22px;background:#888"></div>
<div class="r" style="left:1107px;top:516px;width:1px;height:22px;background:#888"></div>
<div class="r" style="left:250px;top:537px;width:1px;height:22px;background:#888"></div>
<div class="r" style="left:282px;top:537px;width:1px;height:22px;background:#888"></div>
<div class="r" style="left:375px;top:537px;width:1px;height:22px;background:#888"></div>
<div class="r" style="left:565px;top:537px;width:1px;height:22px;background:#888"></div>
<div class="r" style="left:922px;top:537px;width:1px;height:22px;background:#888"></div>
<div class="r" style="left:1107px;top:537px;width:1px;height:22px;background:#888"></div>
<div class="r" style="left:250px;top:558px;width:1px;height:21px;background:#888"></div>
<div class="r" style="left:282px;top:558px;width:1px;height:21px;background:#888"></div>
<div class="r" style="left:375px;top:558px;width:1px;height:21px;background:#888"></div>
<div class="r" style="left:565px;top:558px;width:1px;height:21px;background:#888"></div>
<div class="r" style="left:922px;top:558px;width:1px;height:21px;background:#888"></div>
<div class="r" style="left:1107px;top:558px;width:1px;height:21px;background:#888"></div>
<div class="r" style="left:250px;top:578px;width:1px;height:22px;background:#888"></div>
<div class="r" style="left:282px;top:578px;width:1px;height:22px;background:#888"></div>
<div class="r" style="left:375px;top:578px;width:1px;height:22px;background:#888"></div>
<div class="r" style="left:565px;top:578px;width:1px;height:22px;background:#888"></div>
<div class="r" style="left:922px;top:578px;width:1px;height:22px;background:#888"></div>
<div class="r" style="left:1107px;top:578px;width:1px;height:22px;background:#888"></div>
<div class="r" style="left:250px;top:599px;width:1px;height:22px;background:#888"></div>
<div class="r" style="left:282px;top:599px;width:1px;height:22px;background:#888"></div>
<div class="r" style="left:375px;top:599px;width:1px;height:22px;background:#888"></div>
<div class="r" style="left:565px;top:599px;width:1px;height:22px;background:#888"></div>
<div class="r" style="left:922px;top:599px;width:1px;height:22px;background:#888"></div>
<div class="r" style="left:1107px;top:599px;width:1px;height:22px;background:#888"></div>
<div class="r" style="left:250px;top:620px;width:1px;height:22px;background:#888"></div>
<div class="r" style="left:282px;top:620px;width:1px;height:22px;background:#888"></div>
<div class="r" style="left:375px;top:620px;width:1px;height:22px;background:#888"></div>
<div class="r" style="left:565px;top:620px;width:1px;height:22px;background:#888"></div>
<div class="r" style="left:922px;top:620px;width:1px;height:22px;background:#888"></div>
<div class="r" style="left:1107px;top:620px;width:1px;height:22px;background:#888"></div>
<div class="r" style="left:250px;top:641px;width:1px;height:21px;background:#888"></div>
<div class="r" style="left:282px;top:641px;width:1px;height:21px;background:#888"></div>
<div class="r" style="left:375px;top:641px;width:1px;height:21px;background:#888"></div>
<div class="r" style="left:565px;top:641px;width:1px;height:21px;background:#888"></div>
<div class="r" style="left:922px;top:641px;width:1px;height:21px;background:#888"></div>
<div class="r" style="left:1107px;top:641px;width:1px;height:21px;background:#888"></div>
<div class="r" style="left:250px;top:661px;width:1px;height:22px;background:#888"></div>
<div class="r" style="left:282px;top:661px;width:1px;height:22px;background:#888"></div>
<div class="r" style="left:375px;top:661px;width:1px;height:22px;background:#888"></div>
<div class="r" style="left:565px;top:661px;width:1px;height:22px;background:#888"></div>
<div class="r" style="left:922px;top:661px;width:1px;height:22px;background:#888"></div>
<div class="r" style="left:1107px;top:661px;width:1px;height:22px;background:#888"></div>
<div class="r" style="left:250px;top:682px;width:1px;height:22px;background:#888"></div>
<div class="r" style="left:282px;top:682px;width:1px;height:22px;background:#888"></div>
<div class="r" style="left:375px;top:682px;width:1px;height:22px;background:#888"></div>
<div class="r" style="left:565px;top:682px;width:1px;height:22px;background:#888"></div>
<div class="r" style="left:922px;top:682px;width:1px;height:22px;background:#888"></div>
<div class="r" style="left:1107px;top:682px;width:1px;height:22px;background:#888"></div>
<div class="r" style="left:250px;top:718px;width:1px;height:21px;background:#888"></div>
<div class="r" style="left:282px;top:718px;width:1px;height:21px;background:#888"></div>
<div class="r" style="left:375px;top:718px;width:1px;height:21px;background:#888"></div>
<div class="r" style="left:565px;top:718px;width:1px;height:21px;background:#888"></div>
<div class="r" style="left:922px;top:718px;width:1px;height:21px;background:#888"></div>
<div class="r" style="left:1107px;top:718px;width:1px;height:21px;background:#888"></div>
<div class="r" style="left:250px;top:738px;width:1px;height:22px;background:#888"></div>
<div class="r" style="left:282px;top:738px;width:1px;height:22px;background:#888"></div>
<div class="r" style="left:375px;top:738px;width:1px;height:22px;background:#888"></div>
<div class="r" style="left:565px;top:738px;width:1px;height:22px;background:#888"></div>
<div class="r" style="left:922px;top:738px;width:1px;height:22px;background:#888"></div>
<div class="r" style="left:1107px;top:738px;width:1px;height:22px;background:#888"></div>
<div class="r" style="left:250px;top:759px;width:1px;height:22px;background:#888"></div>
<div class="r" style="left:282px;top:759px;width:1px;height:22px;background:#888"></div>
<div class="r" style="left:375px;top:759px;width:1px;height:22px;background:#888"></div>
<div class="r" style="left:565px;top:759px;width:1px;height:22px;background:#888"></div>
<div class="r" style="left:922px;top:759px;width:1px;height:22px;background:#888"></div>
<div class="r" style="left:1107px;top:759px;width:1px;height:22px;background:#888"></div>
<div class="r" style="left:250px;top:780px;width:1px;height:22px;background:#888"></div>
<div class="r" style="left:282px;top:780px;width:1px;height:22px;background:#888"></div>
<div class="r" style="left:375px;top:780px;width:1px;height:22px;background:#888"></div>
<div class="r" style="left:565px;top:780px;width:1px;height:22px;background:#888"></div>
<div class="r" style="left:922px;top:780px;width:1px;height:22px;background:#888"></div>
<div class="r" style="left:1107px;top:780px;width:1px;height:22px;background:#888"></div>
<div class="r" style="left:250px;top:801px;width:1px;height:21px;background:#888"></div>
<div class="r" style="left:282px;top:801px;width:1px;height:21px;background:#888"></div>
<div class="r" style="left:375px;top:801px;width:1px;height:21px;background:#888"></div>
<div class="r" style="left:565px;top:801px;width:1px;height:21px;background:#888"></div>
<div class="r" style="left:922px;top:801px;width:1px;height:21px;background:#888"></div>
<div class="r" style="left:1107px;top:801px;width:1px;height:21px;background:#888"></div>
<div class="r" style="left:250px;top:821px;width:1px;height:22px;background:#888"></div>
<div class="r" style="left:282px;top:821px;width:1px;height:22px;background:#888"></div>
<div class="r" style="left:375px;top:821px;width:1px;height:22px;background:#888"></div>
<div class="r" style="left:565px;top:821px;width:1px;height:22px;background:#888"></div>
<div class="r" style="left:922px;top:821px;width:1px;height:22px;background:#888"></div>
<div class="r" style="left:1107px;top:821px;width:1px;height:22px;background:#888"></div>
<div class="r" style="left:250px;top:842px;width:1px;height:22px;background:#888"></div>
<div class="r" style="left:282px;top:842px;width:1px;height:22px;background:#888"></div>
<div class="r" style="left:375px;top:842px;width:1px;height:22px;background:#888"></div>
<div class="r" style="left:565px;top:842px;width:1px;height:22px;background:#888"></div>
<div class="r" style="left:922px;top:842px;width:1px;height:22px;background:#888"></div>
<div class="r" style="left:1107px;top:842px;width:1px;height:22px;background:#888"></div>
<div class="r" style="left:250px;top:863px;width:1px;height:22px;background:#888"></div>
<div class="r" style="left:282px;top:863px;width:1px;height:22px;background:#888"></div>
<div class="r" style="left:375px;top:863px;width:1px;height:22px;background:#888"></div>
<div class="r" style="left:565px;top:863px;width:1px;height:22px;background:#888"></div>
<div class="r" style="left:922px;top:863px;width:1px;height:22px;background:#888"></div>
<div class="r" style="left:1107px;top:863px;width:1px;height:22px;background:#888"></div>
<div class="r" style="left:250px;top:114px;width:1px;height:787px;background:#888"></div>
<div class="r" style="left:1107px;top:114px;width:1px;height:787px;background:#888"></div>
<div class="r" style="left:0;top:0;width:218px;height:862px;overflow:hidden;background-color:#656565;background-image:linear-gradient(180deg,#767676 0px,#767676 1px,#535353 1px,#535353 2px,#757575 2px,#757575 3px,#555 3px,#555 4px,#656565 4px,#656565 8px,#545454 8px,#545454 9px);background-size:100% 9px;background-position:0 7px">
<div class="r" style="left:0;top:0;width:1px;height:862px;background:#646464"></div>
<div class="t" style="left:33px;top:27px;font-size:10.8px;color:#fff;font-family:'Liberation Serif', serif;font-weight:normal;-webkit-text-stroke:0.15px #fff">iPECS-MG/GS56MxB.5Dg MAY/15</div>
<div class="t" style="left:33px;top:43px;font-size:10.8px;color:#fff;font-family:'Liberation Serif', serif;font-weight:normal;-webkit-text-stroke:0.15px #fff">Boot Version-1.1Ab AUG/11</div>
<div class="t" style="left:33px;top:60px;font-size:10.8px;color:#fff;font-family:'Liberation Serif', serif;font-weight:normal;-webkit-text-stroke:0.15px #fff">OS Version-1.1Ad MAY/13</div>
<div class="r" style="left:32px;top:77px;width:70px;height:15px;background:#fff"></div>
<div class="btn" style="left:109px;top:76px;width:59px;height:17px;"></div>
<div class="t" style="left:-161.5px;width:600px;text-align:center;top:79px;font-size:10.8px;color:#000;font-family:'Liberation Sans', sans-serif;font-weight:normal;">Find PGM</div>
<div class="btn" style="left:31px;top:98px;width:63px;height:16px;"></div>
<div class="t" style="left:-237.5px;width:600px;text-align:center;top:100px;font-size:10.8px;color:#000;font-family:'Liberation Sans', sans-serif;font-weight:normal;">Hide Menu</div>
<div class="r" style="left:1px;top:121.4px;width:217px;height:25.2px;background:linear-gradient(#d6d6d6 0px,#d6d6d6 1px,#b1b1b1 1px,#a9a9a9 11px,#9b9b9b 15px,#8d8d8d 100%)"></div>
<svg class="r" style="left:13.5px;top:129.3px" width="10" height="10" viewBox="0 0 10 10"><circle cx="5" cy="5" r="4.6" fill="#727272"/><path d="M4 2.8 L6 5 L4 7.2" fill="none" stroke="#e0e0e0" stroke-width="1.3"/></svg>
<div class="t" style="left:27px;top:128.70000000000002px;font-family:'Liberation Serif', serif;font-weight:bold;font-size:13px;letter-spacing:0.4px;color:#444444">Pre-Programmed Data</div>
<div class="r" style="left:1px;top:146.6px;width:217px;height:25.2px;background:linear-gradient(#d6d6d6 0px,#d6d6d6 1px,#b1b1b1 1px,#a9a9a9 11px,#9b9b9b 15px,#8d8d8d 100%)"></div>
<svg class="r" style="left:13.5px;top:154.5px" width="10" height="10" viewBox="0 0 10 10"><circle cx="5" cy="5" r="4.6" fill="#727272"/><path d="M4 2.8 L6 5 L4 7.2" fill="none" stroke="#e0e0e0" stroke-width="1.3"/></svg>
<div class="t" style="left:27px;top:153.9px;font-family:'Liberation Serif', serif;font-weight:bold;font-size:13px;letter-spacing:0.4px;color:#444444">Numbering Plan</div>
<div class="r" style="left:1px;top:171.79999999999998px;width:217px;height:25.2px;background:linear-gradient(#d6d6d6 0px,#d6d6d6 1px,#b1b1b1 1px,#a9a9a9 11px,#9b9b9b 15px,#8d8d8d 100%)"></div>
<svg class="r" style="left:13.5px;top:179.7px" width="10" height="10" viewBox="0 0 10 10"><circle cx="5" cy="5" r="4.6" fill="#727272"/><path d="M4 2.8 L6 5 L4 7.2" fill="none" stroke="#e0e0e0" stroke-width="1.3"/></svg>
<div class="t" style="left:27px;top:179.1px;font-family:'Liberation Serif', serif;font-weight:bold;font-size:13px;letter-spacing:0.4px;color:#444444">Station Port Data</div>
<div class="r" style="left:1px;top:196.99999999999997px;width:217px;height:25.2px;background:linear-gradient(#d6d6d6 0px,#d6d6d6 1px,#b1b1b1 1px,#a9a9a9 11px,#9b9b9b 15px,#8d8d8d 100%)"></div>
<svg class="r" style="left:13.5px;top:204.89999999999998px" width="10" height="10" viewBox="0 0 10 10"><circle cx="5" cy="5" r="4.6" fill="#727272"/><path d="M4 2.8 L6 5 L4 7.2" fill="none" stroke="#e0e0e0" stroke-width="1.3"/></svg>
<div class="t" style="left:27px;top:204.29999999999998px;font-family:'Liberation Serif', serif;font-weight:bold;font-size:13px;letter-spacing:0.4px;color:#444444">Station Number Data</div>
<div class="r" style="left:1px;top:222.19999999999996px;width:217px;height:25.2px;background:linear-gradient(#b0b0b0 0px,#b0b0b0 1px,#3e3e3e 1px,#383838 6px,#0c0c0c 13px,#000 100%)"></div>
<svg class="r" style="left:13.5px;top:230.09999999999997px" width="10" height="10" viewBox="0 0 10 10"><circle cx="5" cy="5" r="4.6" fill="#e8a21a"/><path d="M4 2.8 L6 5 L4 7.2" fill="none" stroke="#3a2a00" stroke-width="1.3"/></svg>
<div class="t" style="left:27px;top:228.59999999999997px;font-family:'Liberation Serif', serif;font-weight:bold;font-size:13px;letter-spacing:0.4px;color:#ff8a00">CO Line Data</div>
<div class="r" style="left:1px;top:247.2px;width:217px;height:19.8px;background:linear-gradient(#9a9a9a 0,#9a9a9a 1px,#444 1px,#444 100%)"></div>
<div class="r" style="left:1px;top:248.2px;width:7px;height:18.8px;background:#4a4a4a radial-gradient(ellipse 8px 11px at 100% 50%,#fff04a 0%,#e8b82a 22%,#b88a2a 45%,rgba(110,95,60,0.55) 70%,rgba(74,74,74,0) 100%)"></div>
<div class="t" style="left:27px;top:254.2px;font-size:10.8px;color:#ffff00;-webkit-text-stroke:0.2px #ffff00">CO Line Attribute(160~163) [N]</div>
<div class="r" style="left:1px;top:267.0px;width:217px;height:19.8px;background:linear-gradient(#9a9a9a 0,#9a9a9a 1px,#5d5d5d 1px,#5d5d5d 100%)"></div>
<div class="r" style="left:1px;top:268.0px;width:7px;height:18.8px;background:#787878"></div>
<div class="t" style="left:27px;top:274.0px;font-size:10.8px;color:#ffffff;-webkit-text-stroke:0.2px #ffffff">Incoming CO ATTR(165~166) [N]</div>
<div class="r" style="left:1px;top:286.8px;width:217px;height:19.8px;background:linear-gradient(#9a9a9a 0,#9a9a9a 1px,#5d5d5d 1px,#5d5d5d 100%)"></div>
<div class="r" style="left:1px;top:287.8px;width:7px;height:18.8px;background:#787878"></div>
<div class="t" style="left:27px;top:293.8px;font-size:10.8px;color:#ffffff;-webkit-text-stroke:0.2px #ffffff">CO Ring Assignment(167) [N]</div>
<div class="r" style="left:1px;top:306.6px;width:217px;height:19.8px;background:linear-gradient(#9a9a9a 0,#9a9a9a 1px,#5d5d5d 1px,#5d5d5d 100%)"></div>
<div class="r" style="left:1px;top:307.6px;width:7px;height:18.8px;background:#787878"></div>
<div class="t" style="left:27px;top:313.6px;font-size:10.8px;color:#ffffff;-webkit-text-stroke:0.2px #ffffff">Normal/DISA CO ATTR(168) [N]</div>
<div class="r" style="left:1px;top:326.40000000000003px;width:217px;height:19.8px;background:linear-gradient(#9a9a9a 0,#9a9a9a 1px,#5d5d5d 1px,#5d5d5d 100%)"></div>
<div class="r" style="left:1px;top:327.40000000000003px;width:7px;height:18.8px;background:#787878"></div>
<div class="t" style="left:27px;top:333.40000000000003px;font-size:10.8px;color:#ffffff;-webkit-text-stroke:0.2px #ffffff">Incoming CO Alternative(169) [N]</div>
<div class="r" style="left:1px;top:346.20000000000005px;width:217px;height:19.8px;background:linear-gradient(#9a9a9a 0,#9a9a9a 1px,#5d5d5d 1px,#5d5d5d 100%)"></div>
<div class="r" style="left:1px;top:347.20000000000005px;width:7px;height:18.8px;background:#787878"></div>
<div class="t" style="left:27px;top:353.20000000000005px;font-size:10.8px;color:#ffffff;-webkit-text-stroke:0.2px #ffffff">Outgoing CO ATTR(170~171) [N]</div>
<div class="r" style="left:1px;top:366.00000000000006px;width:217px;height:19.8px;background:linear-gradient(#9a9a9a 0,#9a9a9a 1px,#5d5d5d 1px,#5d5d5d 100%)"></div>
<div class="r" style="left:1px;top:367.00000000000006px;width:7px;height:18.8px;background:#787878"></div>
<div class="t" style="left:27px;top:373.00000000000006px;font-size:10.8px;color:#ffffff;-webkit-text-stroke:0.2px #ffffff">Outgoing CO Alternative(173) [N]</div>
<div class="r" style="left:1px;top:385.80000000000007px;width:217px;height:19.8px;background:linear-gradient(#9a9a9a 0,#9a9a9a 1px,#5d5d5d 1px,#5d5d5d 100%)"></div>
<div class="r" style="left:1px;top:386.80000000000007px;width:7px;height:18.8px;background:#787878"></div>
<div class="t" style="left:27px;top:392.80000000000007px;font-size:10.8px;color:#ffffff;-webkit-text-stroke:0.2px #ffffff">CO Inter-Digit Timer(174) [N]</div>
<div class="r" style="left:1px;top:405.6000000000001px;width:217px;height:19.8px;background:linear-gradient(#9a9a9a 0,#9a9a9a 1px,#5d5d5d 1px,#5d5d5d 100%)"></div>
<div class="r" style="left:1px;top:406.6000000000001px;width:7px;height:18.8px;background:#787878"></div>
<div class="t" style="left:27px;top:412.6000000000001px;font-size:10.8px;color:#ffffff;-webkit-text-stroke:0.2px #ffffff">DTMF Send Interval(175) [N]</div>
<div class="r" style="left:1px;top:425.4000000000001px;width:217px;height:19.8px;background:linear-gradient(#9a9a9a 0,#9a9a9a 1px,#5d5d5d 1px,#5d5d5d 100%)"></div>
<div class="r" style="left:1px;top:426.4000000000001px;width:7px;height:18.8px;background:#787878"></div>
<div class="t" style="left:27px;top:432.4000000000001px;font-size:10.8px;color:#ffffff;-webkit-text-stroke:0.2px #ffffff">CO COS Assignment(177) [N]</div>
<div class="r" style="left:1px;top:445.2000000000001px;width:217px;height:19.8px;background:linear-gradient(#9a9a9a 0,#9a9a9a 1px,#5d5d5d 1px,#5d5d5d 100%)"></div>
<div class="r" style="left:1px;top:446.2000000000001px;width:7px;height:18.8px;background:#787878"></div>
<div class="t" style="left:27px;top:452.2000000000001px;font-size:10.8px;color:#ffffff;-webkit-text-stroke:0.2px #ffffff">CO-to-CO Attribute(179) [N]</div>
<div class="r" style="left:1px;top:465.0000000000001px;width:217px;height:19.8px;background:linear-gradient(#9a9a9a 0,#9a9a9a 1px,#5d5d5d 1px,#5d5d5d 100%)"></div>
<div class="r" style="left:1px;top:466.0000000000001px;width:7px;height:18.8px;background:#787878"></div>
<div class="t" style="left:27px;top:472.0000000000001px;font-size:10.8px;color:#ffffff;-webkit-text-stroke:0.2px #ffffff">CO Group Access Code(180) [N]</div>
<div class="r" style="left:1px;top:484.8000000000001px;width:217px;height:19.8px;background:linear-gradient(#9a9a9a 0,#9a9a9a 1px,#5d5d5d 1px,#5d5d5d 100%)"></div>
<div class="r" style="left:1px;top:485.8000000000001px;width:7px;height:18.8px;background:#787878"></div>
<div class="t" style="left:27px;top:491.8000000000001px;font-size:10.8px;color:#ffffff;-webkit-text-stroke:0.2px #ffffff">Alternative Ring Table(181) [N]</div>
<div class="r" style="left:1px;top:504.60000000000014px;width:217px;height:19.8px;background:linear-gradient(#9a9a9a 0,#9a9a9a 1px,#5d5d5d 1px,#5d5d5d 100%)"></div>
<div class="r" style="left:1px;top:505.60000000000014px;width:7px;height:18.8px;background:#787878"></div>
<div class="t" style="left:27px;top:511.60000000000014px;font-size:10.8px;color:#ffffff;-webkit-text-stroke:0.2px #ffffff">CO MATM Attribute(182) [N]</div>
<div class="r" style="left:1px;top:524.4000000000001px;width:217px;height:25.2px;background:linear-gradient(#d6d6d6 0px,#d6d6d6 1px,#b1b1b1 1px,#a9a9a9 11px,#9b9b9b 15px,#8d8d8d 100%)"></div>
<svg class="r" style="left:13.5px;top:532.3000000000001px" width="10" height="10" viewBox="0 0 10 10"><circle cx="5" cy="5" r="4.6" fill="#727272"/><path d="M4 2.8 L6 5 L4 7.2" fill="none" stroke="#e0e0e0" stroke-width="1.3"/></svg>
<div class="t" style="left:27px;top:531.7px;font-family:'Liberation Serif', serif;font-weight:bold;font-size:13px;letter-spacing:0.4px;color:#444444">Station Group Data</div>
<div class="r" style="left:1px;top:549.6000000000001px;width:217px;height:25.2px;background:linear-gradient(#d6d6d6 0px,#d6d6d6 1px,#b1b1b1 1px,#a9a9a9 11px,#9b9b9b 15px,#8d8d8d 100%)"></div>
<svg class="r" style="left:13.5px;top:557.5000000000001px" width="10" height="10" viewBox="0 0 10 10"><circle cx="5" cy="5" r="4.6" fill="#727272"/><path d="M4 2.8 L6 5 L4 7.2" fill="none" stroke="#e0e0e0" stroke-width="1.3"/></svg>
<div class="t" style="left:27px;top:556.9000000000001px;font-family:'Liberation Serif', serif;font-weight:bold;font-size:13px;letter-spacing:0.4px;color:#444444">System Data</div>
<div class="r" style="left:1px;top:574.8000000000002px;width:217px;height:25.2px;background:linear-gradient(#d6d6d6 0px,#d6d6d6 1px,#b1b1b1 1px,#a9a9a9 11px,#9b9b9b 15px,#8d8d8d 100%)"></div>
<svg class="r" style="left:13.5px;top:582.7000000000002px" width="10" height="10" viewBox="0 0 10 10"><circle cx="5" cy="5" r="4.6" fill="#727272"/><path d="M4 2.8 L6 5 L4 7.2" fill="none" stroke="#e0e0e0" stroke-width="1.3"/></svg>
<div class="t" style="left:27px;top:582.1000000000001px;font-family:'Liberation Serif', serif;font-weight:bold;font-size:13px;letter-spacing:0.4px;color:#444444">Table Data</div>
<div class="r" style="left:1px;top:600.0000000000002px;width:217px;height:25.2px;background:linear-gradient(#d6d6d6 0px,#d6d6d6 1px,#b1b1b1 1px,#a9a9a9 11px,#9b9b9b 15px,#8d8d8d 100%)"></div>
<svg class="r" style="left:13.5px;top:607.9000000000002px" width="10" height="10" viewBox="0 0 10 10"><circle cx="5" cy="5" r="4.6" fill="#727272"/><path d="M4 2.8 L6 5 L4 7.2" fill="none" stroke="#e0e0e0" stroke-width="1.3"/></svg>
<div class="t" style="left:27px;top:607.3000000000002px;font-family:'Liberation Serif', serif;font-weight:bold;font-size:13px;letter-spacing:0.4px;color:#444444">Tenant Data</div>
<div class="r" style="left:1px;top:625.2000000000003px;width:217px;height:25.2px;background:linear-gradient(#d6d6d6 0px,#d6d6d6 1px,#b1b1b1 1px,#a9a9a9 11px,#9b9b9b 15px,#8d8d8d 100%)"></div>
<svg class="r" style="left:13.5px;top:633.1000000000003px" width="10" height="10" viewBox="0 0 10 10"><circle cx="5" cy="5" r="4.6" fill="#727272"/><path d="M4 2.8 L6 5 L4 7.2" fill="none" stroke="#e0e0e0" stroke-width="1.3"/></svg>
<div class="t" style="left:27px;top:632.5000000000002px;font-family:'Liberation Serif', serif;font-weight:bold;font-size:13px;letter-spacing:0.4px;color:#444444">Board Data</div>
<div class="r" style="left:1px;top:650.4000000000003px;width:217px;height:25.2px;background:linear-gradient(#d6d6d6 0px,#d6d6d6 1px,#b1b1b1 1px,#a9a9a9 11px,#9b9b9b 15px,#8d8d8d 100%)"></div>
<svg class="r" style="left:13.5px;top:658.3000000000003px" width="10" height="10" viewBox="0 0 10 10"><circle cx="5" cy="5" r="4.6" fill="#727272"/><path d="M4 2.8 L6 5 L4 7.2" fill="none" stroke="#e0e0e0" stroke-width="1.3"/></svg>
<div class="t" style="left:27px;top:657.7000000000003px;font-family:'Liberation Serif', serif;font-weight:bold;font-size:13px;letter-spacing:0.4px;color:#444444">Voice Network</div>
<div class="r" style="left:1px;top:675.6000000000004px;width:217px;height:25.2px;background:linear-gradient(#d6d6d6 0px,#d6d6d6 1px,#b1b1b1 1px,#a9a9a9 11px,#9b9b9b 15px,#8d8d8d 100%)"></div>
<svg class="r" style="left:13.5px;top:683.5000000000003px" width="10" height="10" viewBox="0 0 10 10"><circle cx="5" cy="5" r="4.6" fill="#727272"/><path d="M4 2.8 L6 5 L4 7.2" fill="none" stroke="#e0e0e0" stroke-width="1.3"/></svg>
<div class="t" style="left:27px;top:682.9000000000003px;font-family:'Liberation Serif', serif;font-weight:bold;font-size:13px;letter-spacing:0.4px;color:#444444">T-Net Data</div>
<div class="r" style="left:1px;top:700.8000000000004px;width:217px;height:25.2px;background:linear-gradient(#d6d6d6 0px,#d6d6d6 1px,#b1b1b1 1px,#a9a9a9 11px,#9b9b9b 15px,#8d8d8d 100%)"></div>
<svg class="r" style="left:13.5px;top:708.7000000000004px" width="10" height="10" viewBox="0 0 10 10"><circle cx="5" cy="5" r="4.6" fill="#727272"/><path d="M4 2.8 L6 5 L4 7.2" fill="none" stroke="#e0e0e0" stroke-width="1.3"/></svg>
<div class="t" style="left:27px;top:708.1000000000004px;font-family:'Liberation Serif', serif;font-weight:bold;font-size:13px;letter-spacing:0.4px;color:#444444">H.323 Data</div>
<div class="r" style="left:1px;top:726.0000000000005px;width:217px;height:25.2px;background:linear-gradient(#d6d6d6 0px,#d6d6d6 1px,#b1b1b1 1px,#a9a9a9 11px,#9b9b9b 15px,#8d8d8d 100%)"></div>
<svg class="r" style="left:13.5px;top:733.9000000000004px" width="10" height="10" viewBox="0 0 10 10"><circle cx="5" cy="5" r="4.6" fill="#727272"/><path d="M4 2.8 L6 5 L4 7.2" fill="none" stroke="#e0e0e0" stroke-width="1.3"/></svg>
<div class="t" style="left:27px;top:733.3000000000004px;font-family:'Liberation Serif', serif;font-weight:bold;font-size:13px;letter-spacing:0.4px;color:#444444">SIP CO Data</div>
<div class="r" style="left:1px;top:751.2000000000005px;width:217px;height:25.2px;background:linear-gradient(#d6d6d6 0px,#d6d6d6 1px,#b1b1b1 1px,#a9a9a9 11px,#9b9b9b 15px,#8d8d8d 100%)"></div>
<svg class="r" style="left:13.5px;top:759.1000000000005px" width="10" height="10" viewBox="0 0 10 10"><circle cx="5" cy="5" r="4.6" fill="#727272"/><path d="M4 2.8 L6 5 L4 7.2" fill="none" stroke="#e0e0e0" stroke-width="1.3"/></svg>
<div class="t" style="left:27px;top:758.5000000000005px;font-family:'Liberation Serif', serif;font-weight:bold;font-size:13px;letter-spacing:0.4px;color:#444444">SIP Station Data</div>
<div class="r" style="left:1px;top:776.4000000000005px;width:217px;height:25.2px;background:linear-gradient(#d6d6d6 0px,#d6d6d6 1px,#b1b1b1 1px,#a9a9a9 11px,#9b9b9b 15px,#8d8d8d 100%)"></div>
<svg class="r" style="left:13.5px;top:784.3000000000005px" width="10" height="10" viewBox="0 0 10 10"><circle cx="5" cy="5" r="4.6" fill="#727272"/><path d="M4 2.8 L6 5 L4 7.2" fill="none" stroke="#e0e0e0" stroke-width="1.3"/></svg>
<div class="t" style="left:27px;top:783.7000000000005px;font-family:'Liberation Serif', serif;font-weight:bold;font-size:13px;letter-spacing:0.4px;color:#444444">Zone Data</div>
<div class="r" style="left:1px;top:801.6000000000006px;width:217px;height:25.2px;background:linear-gradient(#d6d6d6 0px,#d6d6d6 1px,#b1b1b1 1px,#a9a9a9 11px,#9b9b9b 15px,#8d8d8d 100%)"></div>
<svg class="r" style="left:13.5px;top:809.5000000000006px" width="10" height="10" viewBox="0 0 10 10"><circle cx="5" cy="5" r="4.6" fill="#727272"/><path d="M4 2.8 L6 5 L4 7.2" fill="none" stroke="#e0e0e0" stroke-width="1.3"/></svg>
<div class="t" style="left:27px;top:808.9000000000005px;font-family:'Liberation Serif', serif;font-weight:bold;font-size:13px;letter-spacing:0.4px;color:#444444">SNMP Data</div>
<div class="r" style="left:1px;top:826.8000000000006px;width:217px;height:25.2px;background:linear-gradient(#d6d6d6 0px,#d6d6d6 1px,#b1b1b1 1px,#a9a9a9 11px,#9b9b9b 15px,#8d8d8d 100%)"></div>
<svg class="r" style="left:13.5px;top:834.7000000000006px" width="10" height="10" viewBox="0 0 10 10"><circle cx="5" cy="5" r="4.6" fill="#727272"/><path d="M4 2.8 L6 5 L4 7.2" fill="none" stroke="#e0e0e0" stroke-width="1.3"/></svg>
<div class="t" style="left:27px;top:834.1000000000006px;font-family:'Liberation Serif', serif;font-weight:bold;font-size:13px;letter-spacing:0.4px;color:#444444">DECT Data</div>
<div class="r" style="left:1px;top:852.0000000000007px;width:217px;height:25.2px;background:linear-gradient(#d6d6d6 0px,#d6d6d6 1px,#b1b1b1 1px,#a9a9a9 11px,#9b9b9b 15px,#8d8d8d 100%)"></div>
<svg class="r" style="left:13.5px;top:859.9000000000007px" width="10" height="10" viewBox="0 0 10 10"><circle cx="5" cy="5" r="4.6" fill="#727272"/><path d="M4 2.8 L6 5 L4 7.2" fill="none" stroke="#e0e0e0" stroke-width="1.3"/></svg>
<div class="t" style="left:27px;top:859.3000000000006px;font-family:'Liberation Serif', serif;font-weight:bold;font-size:13px;letter-spacing:0.4px;color:#444444">Server Mode</div>
</div>
<div class="r" style="left:218px;top:0px;width:17px;height:862px;background:#f1f1f1"></div>
<div class="r" style="left:220px;top:17px;width:13px;height:770px;background:#c1c1c1"></div>
<svg class="r" style="left:218px;top:0px" width="17" height="17"><path d="M4.5 11 L8.5 6.5 L12.5 11 Z" fill="#a3a3a3"/></svg>
<svg class="r" style="left:218px;top:846px" width="17" height="17"><path d="M4.5 5.5 L8.5 10 L12.5 5.5 Z" fill="#505050"/></svg>
<div class="r" style="left:0px;top:862px;width:218px;height:7px;background:#f1f1f1"></div>
<div class="r" style="left:9px;top:864px;width:190px;height:5px;background:#c1c1c1"></div>
<div class="r" style="left:218px;top:862px;width:17px;height:7px;background:#dcdcdc"></div>
<svg class="r" style="left:0px;top:862px" width="17" height="17"><path d="M6 8.5 L10.5 4.5 L10.5 12.5 Z" fill="#a3a3a3"/></svg>
<svg class="r" style="left:201px;top:862px" width="17" height="17"><path d="M12 8.5 L7.5 4.5 L7.5 12.5 Z" fill="#505050"/></svg>
</body></html>
